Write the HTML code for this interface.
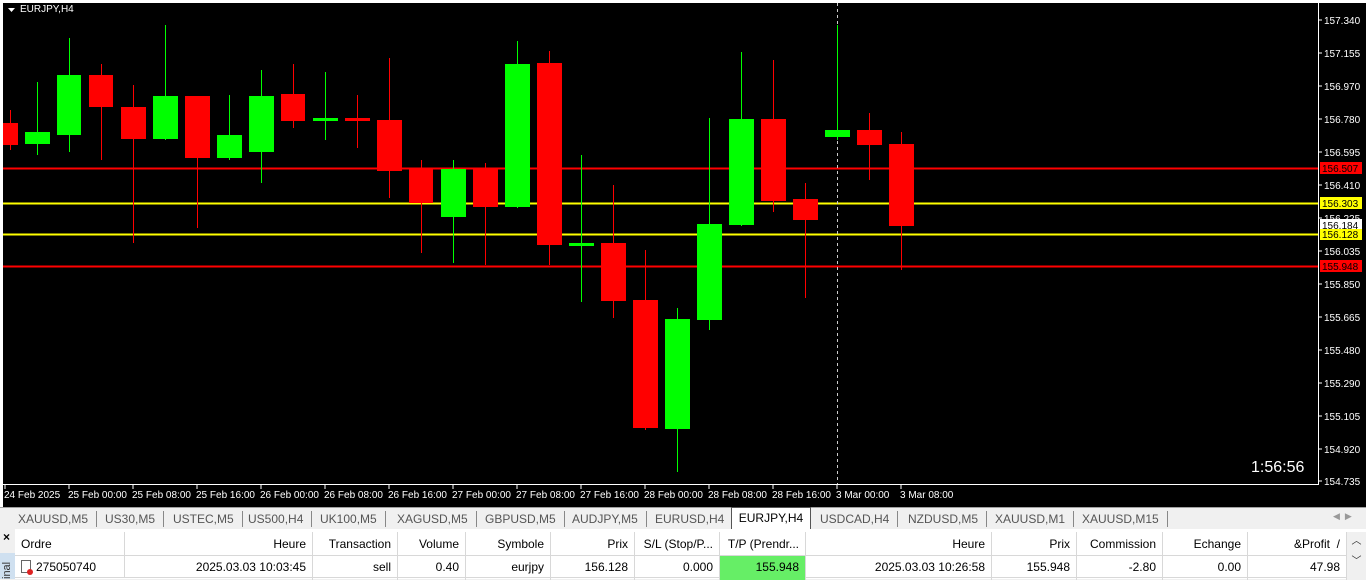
<!DOCTYPE html><html><head><meta charset="utf-8"><style>
*{margin:0;padding:0;box-sizing:border-box}
body{width:1366px;height:579px;overflow:hidden;background:#f0f0f0;font-family:"Liberation Sans",sans-serif;position:relative}
svg{position:absolute;left:0;top:0}
.tabs{position:absolute;left:0;top:507px;width:1366px;height:22px;background:#f0f0f0;border-top:1px solid #a0a0a0;font-size:12px;color:#555}
.tab{position:absolute;top:3px;padding:0 8px;height:16px;line-height:16px;border-right:1px solid #888}
.act{position:absolute;left:731px;top:-1px;width:80px;height:22px;background:#fff;border:1px solid #555;border-bottom:none;color:#000;line-height:20px;text-align:center}
.tbl{position:absolute;left:15px;top:532px;width:1332px;font-size:12px;color:#000}
.row{position:absolute;left:0;height:24px;width:1332px;background:#fff}
.c{position:absolute;top:0;height:24px;line-height:24px;border-right:1px solid #d8d8d8;padding:0 6px;text-align:right;white-space:nowrap;overflow:hidden}
.l{text-align:left}
</style></head><body>
<svg width="1366" height="507" font-family="Liberation Sans, sans-serif">
<rect x="0" y="0" width="1366" height="507" fill="#fff"/>
<rect x="3" y="3" width="1363" height="504" fill="#000"/>
<g font-size="10" fill="#fff">
<path d="M8 8h7l-3.5 4z" fill="#fff"/><text x="20" y="12">EURJPY,H4</text>
</g>
<!-- level lines -->
<line x1="3" y1="168.5" x2="1318" y2="168.5" stroke="#f00" stroke-width="2"/>
<line x1="3" y1="203.5" x2="1318" y2="203.5" stroke="#ff0" stroke-width="2"/>
<line x1="3" y1="234.5" x2="1318" y2="234.5" stroke="#ff0" stroke-width="2"/>
<line x1="3" y1="266.5" x2="1318" y2="266.5" stroke="#f00" stroke-width="2"/>
<line x1="837.5" y1="3" x2="837.5" y2="484" stroke="#ccc" stroke-dasharray="3,3"/>
<!-- wicks -->
<g stroke-width="1">
<g stroke="#f00">
<line x1="10.5" y1="110" x2="10.5" y2="150"/><line x1="101.5" y1="64" x2="101.5" y2="160"/><line x1="133.5" y1="85" x2="133.5" y2="243"/><line x1="197.5" y1="96" x2="197.5" y2="228"/><line x1="293.5" y1="64" x2="293.5" y2="128"/><line x1="357.5" y1="95" x2="357.5" y2="148"/><line x1="389.5" y1="58" x2="389.5" y2="198"/><line x1="421.5" y1="160" x2="421.5" y2="253"/><line x1="485.5" y1="163" x2="485.5" y2="265"/><line x1="549.5" y1="51" x2="549.5" y2="265"/><line x1="613.5" y1="185" x2="613.5" y2="318"/><line x1="645.5" y1="250" x2="645.5" y2="430"/><line x1="773.5" y1="60" x2="773.5" y2="212"/><line x1="805.5" y1="183" x2="805.5" y2="298"/><line x1="869.5" y1="113" x2="869.5" y2="180"/><line x1="901.5" y1="132" x2="901.5" y2="270"/>
</g>
<g stroke="#0f0">
<line x1="37.5" y1="82" x2="37.5" y2="155"/><line x1="69.5" y1="38" x2="69.5" y2="152"/><line x1="165.5" y1="25" x2="165.5" y2="140"/><line x1="229.5" y1="95" x2="229.5" y2="160"/><line x1="261.5" y1="70" x2="261.5" y2="183"/><line x1="325.5" y1="72" x2="325.5" y2="140"/><line x1="453.5" y1="160" x2="453.5" y2="263"/><line x1="517.5" y1="41" x2="517.5" y2="208"/><line x1="581.5" y1="155" x2="581.5" y2="302"/><line x1="677.5" y1="308" x2="677.5" y2="472"/><line x1="709.5" y1="118" x2="709.5" y2="330"/><line x1="741.5" y1="52" x2="741.5" y2="226"/><line x1="837.5" y1="25" x2="837.5" y2="140"/>
</g></g>
<g fill="#f00">
<rect x="3" y="123" width="15" height="22"/><rect x="89" y="75" width="24" height="32"/><rect x="121" y="107" width="25" height="32"/><rect x="185" y="96" width="25" height="62"/><rect x="281" y="94" width="24" height="27"/><rect x="345" y="118" width="25" height="3"/><rect x="377" y="120" width="25" height="51"/><rect x="409" y="169" width="24" height="34"/><rect x="473" y="169" width="25" height="38"/><rect x="537" y="63" width="25" height="182"/><rect x="601" y="243" width="25" height="58"/><rect x="633" y="300" width="25" height="128"/><rect x="761" y="119" width="25" height="82"/><rect x="793" y="199" width="25" height="21"/><rect x="857" y="130" width="25" height="15"/><rect x="889" y="144" width="25" height="82"/>
</g>
<g fill="#0f0">
<rect x="25" y="132" width="25" height="12"/><rect x="57" y="75" width="24" height="60"/><rect x="153" y="96" width="25" height="43"/><rect x="217" y="135" width="25" height="23"/><rect x="249" y="96" width="25" height="56"/><rect x="313" y="118" width="25" height="3"/><rect x="441" y="169" width="25" height="48"/><rect x="505" y="64" width="25" height="143"/><rect x="569" y="243" width="25" height="3"/><rect x="665" y="319" width="25" height="110"/><rect x="697" y="224" width="25" height="96"/><rect x="729" y="119" width="25" height="106"/><rect x="825" y="130" width="25" height="7"/>
</g>
<!-- axes -->
<line x1="1318.5" y1="3" x2="1318.5" y2="485" stroke="#fff"/>
<line x1="3" y1="484.5" x2="1319" y2="484.5" stroke="#fff"/>
<g font-size="10" fill="#fff">
<text x="1324" y="24">157.340</text><text x="1324" y="57">157.155</text><text x="1324" y="90">156.970</text><text x="1324" y="123">156.780</text><text x="1324" y="156">156.595</text><text x="1324" y="189">156.410</text><text x="1324" y="222">156.225</text><text x="1324" y="255">156.035</text><text x="1324" y="288">155.850</text><text x="1324" y="321">155.665</text><text x="1324" y="354">155.480</text><text x="1324" y="387">155.290</text><text x="1324" y="420">155.105</text><text x="1324" y="453">154.920</text><text x="1324" y="485">154.735</text>
</g>
<g stroke="#fff"><path d="M1318 20h4M1318 53h4M1318 86h4M1318 119h4M1318 152h4M1318 185h4M1318 218h4M1318 251h4M1318 284h4M1318 317h4M1318 350h4M1318 383h4M1318 416h4M1318 449h4M1318 481h4"/></g>
<rect x="1320" y="162" width="42" height="12" fill="#f00"/><text x="1322" y="172" font-size="10" fill="#000">156.507</text>
<rect x="1320" y="197" width="42" height="12" fill="#ff0"/><text x="1322" y="207" font-size="10" fill="#000">156.303</text>
<rect x="1320" y="219" width="42" height="12" fill="#fff"/><text x="1322" y="229" font-size="10" fill="#000">156.184</text>
<rect x="1320" y="229" width="42" height="11" fill="#ff0"/><text x="1322" y="238" font-size="10" fill="#000">156.128</text>
<rect x="1320" y="260" width="42" height="12" fill="#f00"/><text x="1322" y="270" font-size="10" fill="#000">155.948</text>
<text x="1251" y="472" font-size="16" fill="#fff">1:56:56</text>
<g stroke="#fff"><path d="M5 484v5M69 484v5M133 484v5M197 484v5M261 484v5M325 484v5M389 484v5M453 484v5M517 484v5M581 484v5M645 484v5M709 484v5M773 484v5M837 484v5M901 484v5"/></g>
<g font-size="10" fill="#fff">
<text x="4" y="498">24 Feb 2025</text><text x="68" y="498">25 Feb 00:00</text><text x="132" y="498">25 Feb 08:00</text><text x="196" y="498">25 Feb 16:00</text><text x="260" y="498">26 Feb 00:00</text><text x="324" y="498">26 Feb 08:00</text><text x="388" y="498">26 Feb 16:00</text><text x="452" y="498">27 Feb 00:00</text><text x="516" y="498">27 Feb 08:00</text><text x="580" y="498">27 Feb 16:00</text><text x="644" y="498">28 Feb 00:00</text><text x="708" y="498">28 Feb 08:00</text><text x="772" y="498">28 Feb 16:00</text><text x="836" y="498">3 Mar 00:00</text><text x="900" y="498">3 Mar 08:00</text>
</g>
</svg>
<div class="tabs">
<span class="tab" style="left:10px">XAUUSD,M5</span><span class="tab" style="left:97px">US30,M5</span><span class="tab" style="left:165px">USTEC,M5</span><span class="tab" style="left:240px">US500,H4</span><span class="tab" style="left:312px">UK100,M5</span><span class="tab" style="left:389px">XAGUSD,M5</span><span class="tab" style="left:477px">GBPUSD,M5</span><span class="tab" style="left:564px">AUDJPY,M5</span><span class="tab" style="left:647px;border-right:none">EURUSD,H4</span>
<div class="act">EURJPY,H4</div>
<span class="tab" style="left:812px">USDCAD,H4</span><span class="tab" style="left:900px">NZDUSD,M5</span><span class="tab" style="left:987px">XAUUSD,M1</span><span class="tab" style="left:1074px">XAUUSD,M15</span>
<span style="position:absolute;left:1333px;top:3px;color:#999;font-size:9px">◀ &nbsp;▶</span>
</div>
<div style="position:absolute;left:0;top:529px;width:1366px;height:50px;background:#fff"></div>
<div style="position:absolute;left:0;top:529px;width:15px;height:50px;background:#f0f0f0"><div style="font-size:12px;font-weight:bold;padding-left:3px;line-height:16px">×</div><div style="position:absolute;left:0;top:24px;width:15px;height:26px;background:#cfe0f0;font-size:11px;color:#333;writing-mode:vertical-rl;transform:rotate(180deg);line-height:14px">inal</div></div>
<div class="tbl">
<div class="row" style="top:0;background:#fff;border-bottom:1px solid #d8d8d8">
<div class="c l" style="left:0;width:110px">Ordre</div><div class="c" style="left:110px;width:188px">Heure</div><div class="c" style="left:298px;width:85px">Transaction</div><div class="c" style="left:383px;width:68px">Volume</div><div class="c" style="left:451px;width:85px">Symbole</div><div class="c" style="left:536px;width:84px">Prix</div><div class="c" style="left:620px;width:85px">S/L (Stop/P...</div><div class="c" style="left:705px;width:86px">T/P (Prendr...</div><div class="c" style="left:791px;width:186px">Heure</div><div class="c" style="left:977px;width:85px">Prix</div><div class="c" style="left:1062px;width:86px">Commission</div><div class="c" style="left:1148px;width:85px">Echange</div><div class="c" style="left:1233px;width:99px">&amp;Profit &nbsp;/</div>
</div>
<div class="row" style="top:24px;height:22px;border-bottom:1px solid #d8d8d8">
<div class="c l" style="left:0;width:110px;height:22px;line-height:22px"><span style="display:inline-block;width:10px;height:13px;border:1px solid #666;vertical-align:-2px;margin-right:5px;position:relative"><span style="position:absolute;right:-3px;bottom:-3px;width:6px;height:6px;border-radius:3px;background:#d22"></span></span>275050740</div><div class="c" style="left:110px;width:188px;line-height:22px">2025.03.03 10:03:45</div><div class="c" style="left:298px;width:85px;line-height:22px">sell</div><div class="c" style="left:383px;width:68px;line-height:22px">0.40</div><div class="c" style="left:451px;width:85px;line-height:22px">eurjpy</div><div class="c" style="left:536px;width:84px;line-height:22px">156.128</div><div class="c" style="left:620px;width:85px;line-height:22px">0.000</div><div class="c" style="left:705px;width:86px;line-height:22px;background:#66ee66">155.948</div><div class="c" style="left:791px;width:186px;line-height:22px">2025.03.03 10:26:58</div><div class="c" style="left:977px;width:85px;line-height:22px">155.948</div><div class="c" style="left:1062px;width:86px;line-height:22px">-2.80</div><div class="c" style="left:1148px;width:85px;line-height:22px">0.00</div><div class="c" style="left:1233px;width:99px;line-height:22px">47.98</div>
</div>
</div>
<div style="position:absolute;left:1347px;top:532px;width:19px;height:47px;background:#f0f0f0;color:#333;font-size:10px;text-align:center;line-height:20px">︿<br>﹀</div>
</body></html>
